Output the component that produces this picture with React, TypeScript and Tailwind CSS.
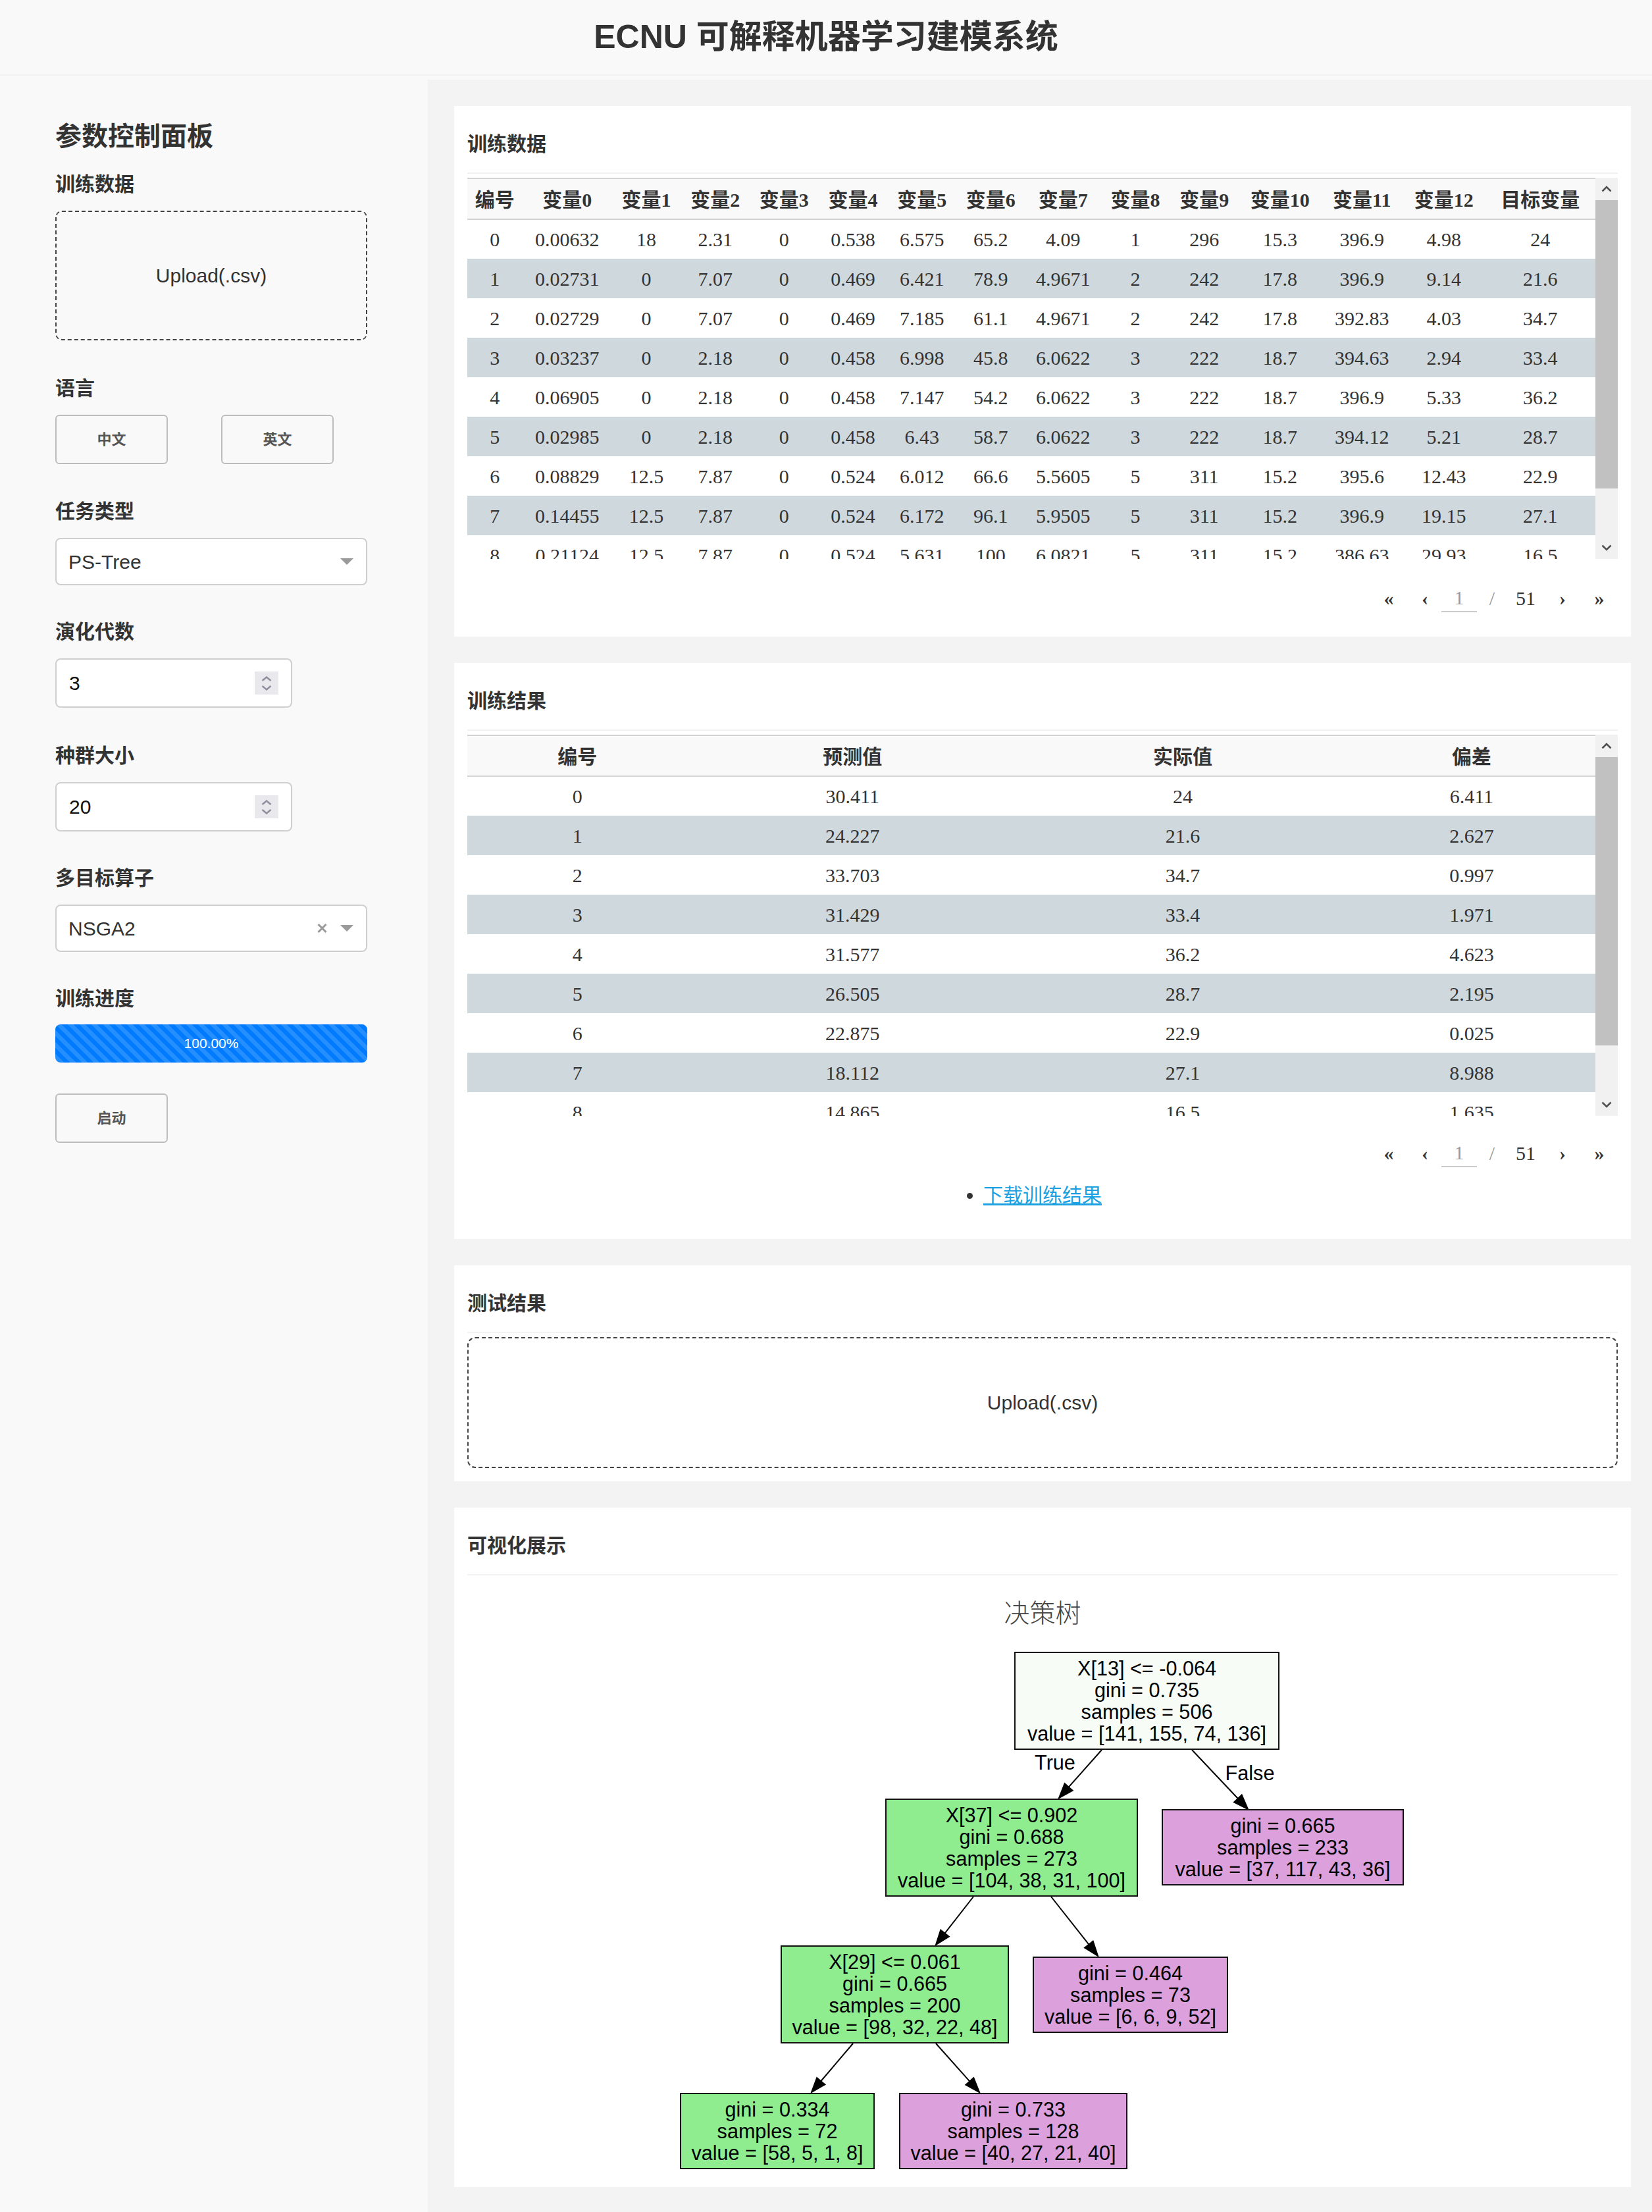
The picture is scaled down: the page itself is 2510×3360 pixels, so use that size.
import React from "react";

const serif = "font-['Liberation_Serif','Noto_Sans_CJK_SC',serif]";

const trainHeaders = [
  "编号", "变量0", "变量1", "变量2", "变量3", "变量4", "变量5", "变量6",
  "变量7", "变量8", "变量9", "变量10", "变量11", "变量12", "目标变量",
];

const trainRows: string[][] = [
  ["0", "0.00632", "18", "2.31", "0", "0.538", "6.575", "65.2", "4.09", "1", "296", "15.3", "396.9", "4.98", "24"],
  ["1", "0.02731", "0", "7.07", "0", "0.469", "6.421", "78.9", "4.9671", "2", "242", "17.8", "396.9", "9.14", "21.6"],
  ["2", "0.02729", "0", "7.07", "0", "0.469", "7.185", "61.1", "4.9671", "2", "242", "17.8", "392.83", "4.03", "34.7"],
  ["3", "0.03237", "0", "2.18", "0", "0.458", "6.998", "45.8", "6.0622", "3", "222", "18.7", "394.63", "2.94", "33.4"],
  ["4", "0.06905", "0", "2.18", "0", "0.458", "7.147", "54.2", "6.0622", "3", "222", "18.7", "396.9", "5.33", "36.2"],
  ["5", "0.02985", "0", "2.18", "0", "0.458", "6.43", "58.7", "6.0622", "3", "222", "18.7", "394.12", "5.21", "28.7"],
  ["6", "0.08829", "12.5", "7.87", "0", "0.524", "6.012", "66.6", "5.5605", "5", "311", "15.2", "395.6", "12.43", "22.9"],
  ["7", "0.14455", "12.5", "7.87", "0", "0.524", "6.172", "96.1", "5.9505", "5", "311", "15.2", "396.9", "19.15", "27.1"],
  ["8", "0.21124", "12.5", "7.87", "0", "0.524", "5.631", "100", "6.0821", "5", "311", "15.2", "386.63", "29.93", "16.5"],
];

const resultHeaders = ["编号", "预测值", "实际值", "偏差"];

const resultRows: string[][] = [
  ["0", "30.411", "24", "6.411"],
  ["1", "24.227", "21.6", "2.627"],
  ["2", "33.703", "34.7", "0.997"],
  ["3", "31.429", "33.4", "1.971"],
  ["4", "31.577", "36.2", "4.623"],
  ["5", "26.505", "28.7", "2.195"],
  ["6", "22.875", "22.9", "0.025"],
  ["7", "18.112", "27.1", "8.988"],
  ["8", "14.865", "16.5", "1.635"],
];

const Label = ({ children, mt = "mt-[55px]" }: { children: React.ReactNode; mt?: string }) => (
  <div className={`${mt} text-[30px] leading-[36px] font-bold text-[#333]`}>{children}</div>
);

const Caret = () => (
  <svg width="20" height="10" viewBox="0 0 20 10">
    <polygon points="0,0 20,0 10,10" fill="#9a9a9a" />
  </svg>
);

const NumberInput = ({ value }: { value: string }) => (
  <div className="mt-[22px] w-[360px] h-[75px] rounded-[8px] border-2 border-[#cfcfcf] bg-white flex items-center pl-[19px] pr-[19px]">
    <span className="flex-1 text-[30px] text-[#111]">{value}</span>
    <div className="w-[36px] h-[35px] bg-[#e9e9ed] flex flex-col items-center justify-center gap-[6px]">
      <svg width="16" height="8" viewBox="0 0 16 8">
        <polyline points="1.5,7 8,1.5 14.5,7" fill="none" stroke="#8d8d9c" strokeWidth="2.4" />
      </svg>
      <svg width="16" height="8" viewBox="0 0 16 8">
        <polyline points="1.5,1 8,6.5 14.5,1" fill="none" stroke="#8d8d9c" strokeWidth="2.4" />
      </svg>
    </div>
  </div>
);

const OutlineButton = ({ children, className = "" }: { children: React.ReactNode; className?: string }) => (
  <button className={`w-[171px] h-[75px] rounded-[6px] border-2 border-[#bdbdbd] bg-[#f9f9f9] text-[22px] font-bold text-[#555] ${className}`}>
    {children}
  </button>
);

const Sidebar = () => (
  <aside className="w-[650px] shrink-0 pl-[84px] pt-[62px]">
    <h2 className="text-[40px] leading-[48px] font-bold text-[#333]">参数控制面板</h2>
    <Label mt="mt-[31px]">训练数据</Label>
    <div className="mt-[22px] w-[474px] h-[197px] rounded-[10px] border-2 border-dashed border-[#444] flex items-center justify-center text-[30px] text-[#333]">
      Upload(.csv)
    </div>

    <Label>语言</Label>
    <div className="mt-[22px] flex">
      <OutlineButton>中文</OutlineButton>
      <OutlineButton className="ml-[81px]">英文</OutlineButton>
    </div>

    <Label mt="mt-[54px]">任务类型</Label>
    <div className="mt-[22px] w-[474px] h-[72px] rounded-[8px] border-2 border-[#cfcfcf] bg-white flex items-center pl-[18px] pr-[19px]">
      <span className="flex-1 text-[30px] text-[#333]">PS-Tree</span>
      <Caret />
    </div>

    <Label mt="mt-[53px]">演化代数</Label>
    <NumberInput value="3" />

    <Label>种群大小</Label>
    <NumberInput value="20" />

    <Label mt="mt-[53px]">多目标算子</Label>
    <div className="mt-[22px] w-[474px] h-[72px] rounded-[8px] border-2 border-[#cfcfcf] bg-white flex items-center pl-[18px] pr-[19px]">
      <span className="flex-1 text-[30px] text-[#333]">NSGA2</span>
      <svg width="15" height="14" viewBox="0 0 15 14" className="mr-[20px]">
        <path d="M1.5 1 L13.5 13 M13.5 1 L1.5 13" stroke="#9a9a9a" strokeWidth="3" />
      </svg>
      <Caret />
    </div>

    <Label mt="mt-[53px]">训练进度</Label>
    <div className="mt-[21px] w-[474px] h-[58px] rounded-[8px] bg-[#007bff] bg-[linear-gradient(45deg,rgba(255,255,255,.15)_25%,transparent_25%,transparent_50%,rgba(255,255,255,.15)_50%,rgba(255,255,255,.15)_75%,transparent_75%,transparent)] bg-[length:18px_18px] flex items-center justify-center text-[21px] text-white">
      100.00%
    </div>

    <OutlineButton className="mt-[47px] h-[74px]">启动</OutlineButton>
  </aside>
);

const Card = ({ title, children, className = "" }: { title: string; children: React.ReactNode; className?: string }) => (
  <section className={`bg-white px-[20px] pt-[40px] ${className}`}>
    <h3 className="text-[30px] leading-[36px] font-bold text-[#333]">{title}</h3>
    <div className="mt-[25px] h-[2px] bg-[#f2f2f2]" />
    {children}
  </section>
);

const FakeScrollbar = () => (
  <div className="w-[34px] shrink-0 bg-[#f1f1f1] flex flex-col">
    <div className="h-[34px] flex items-center justify-center">
      <svg width="16" height="10" viewBox="0 0 16 10">
        <polyline points="1.5,8.5 8,2 14.5,8.5" fill="none" stroke="#505050" strokeWidth="2.6" />
      </svg>
    </div>
    <div className="h-[438px] bg-[#c1c1c1]" />
    <div className="flex-1" />
    <div className="h-[34px] flex items-center justify-center">
      <svg width="16" height="10" viewBox="0 0 16 10">
        <polyline points="1.5,1.5 8,8 14.5,1.5" fill="none" stroke="#505050" strokeWidth="2.6" />
      </svg>
    </div>
  </div>
);

const DataTable = ({ headers, rows }: { headers: string[]; rows: string[][] }) => (
  <div className="mt-[6px] flex h-[579px]">
    <div className="flex-1 overflow-hidden">
      <table className={`w-full border-collapse text-[30px] text-[#333] ${serif}`}>
        <thead>
          <tr>
            {headers.map((h) => (
              <th key={h} className="h-[62px] p-0 pt-[3px] font-bold text-center bg-[#f9f9f9] border-t-2 border-b-2 border-[#d3d3d3] whitespace-nowrap">
                {h}
              </th>
            ))}
          </tr>
        </thead>
        <tbody>
          {rows.map((row, i) => (
            <tr key={i} className={i % 2 === 1 ? "bg-[#cfd8dc]" : "bg-white"}>
              {row.map((cell, j) => (
                <td key={j} className="h-[60px] p-0 text-center whitespace-nowrap">
                  {cell}
                </td>
              ))}
            </tr>
          ))}
        </tbody>
      </table>
    </div>
    <FakeScrollbar />
  </div>
);

const Pagination = ({ mt }: { mt: string }) => (
  <div className={`${mt} h-[44px] flex items-center justify-end pr-[18px] text-[30px] ${serif}`}>
    <span className="w-[20px] text-center text-[#333] font-bold">«</span>
    <span className="ml-[40px] w-[10px] text-center text-[#333] font-bold">‹</span>
    <span className="ml-[20px] w-[54px] h-[44px] border-b-2 border-[#cccccc] flex items-center justify-center text-[#999]">1</span>
    <span className="ml-[16px] w-[14px] text-center text-[#999]">/</span>
    <span className="ml-[29px] w-[30px] text-center text-[#333]">51</span>
    <span className="ml-[36px] w-[10px] text-center text-[#333] font-bold">›</span>
    <span className="ml-[41px] w-[20px] text-center text-[#333] font-bold">»</span>
  </div>
);

type TreeNode = { x1: number; y1: number; x2: number; y2: number; fill: string; lines: string[] };

const treeNodes: TreeNode[] = [
  { x1: 1543, y1: 2508, x2: 1944, y2: 2655, fill: "#f7fdf6", lines: ["X[13] <= -0.064", "gini = 0.735", "samples = 506", "value = [141, 155, 74, 136]"] },
  { x1: 1347, y1: 2731, x2: 1729, y2: 2878, fill: "#8fec8f", lines: ["X[37] <= 0.902", "gini = 0.688", "samples = 273", "value = [104, 38, 31, 100]"] },
  { x1: 1767, y1: 2747, x2: 2133, y2: 2861, fill: "#dca0dc", lines: ["gini = 0.665", "samples = 233", "value = [37, 117, 43, 36]"] },
  { x1: 1188, y1: 2954, x2: 1533, y2: 3101, fill: "#8fec8f", lines: ["X[29] <= 0.061", "gini = 0.665", "samples = 200", "value = [98, 32, 22, 48]"] },
  { x1: 1571, y1: 2971, x2: 1866, y2: 3085, fill: "#dca0dc", lines: ["gini = 0.464", "samples = 73", "value = [6, 6, 9, 52]"] },
  { x1: 1035, y1: 3178, x2: 1329, y2: 3292, fill: "#8fec8f", lines: ["gini = 0.334", "samples = 72", "value = [58, 5, 1, 8]"] },
  { x1: 1368, y1: 3178, x2: 1713, y2: 3292, fill: "#dca0dc", lines: ["gini = 0.733", "samples = 128", "value = [40, 27, 21, 40]"] },
];

const treeEdges: [number, number, number, number][] = [
  [1675, 2656, 1610, 2729],
  [1812, 2656, 1897, 2746],
  [1480, 2879, 1423, 2952],
  [1598, 2879, 1669, 2969],
  [1297, 3102, 1234, 3176],
  [1423, 3102, 1489, 3176],
];

const Edge = ({ e }: { e: [number, number, number, number] }) => {
  const [sx, sy, tx, ty] = e;
  const len = Math.hypot(tx - sx, ty - sy);
  const ux = (tx - sx) / len;
  const uy = (ty - sy) / len;
  const bx = tx - ux * 22;
  const by = ty - uy * 22;
  const px = -uy * 8;
  const py = ux * 8;
  return (
    <g>
      <line x1={sx} y1={sy} x2={bx} y2={by} stroke="#000" strokeWidth="2" />
      <polygon points={`${tx},${ty} ${bx + px},${by + py} ${bx - px},${by - py}`} fill="#000" stroke="#000" strokeWidth="2" />
    </g>
  );
};

const DecisionTree = () => (
  <svg width="1110" height="800" viewBox="1030 2500 1110 800" className="block mx-auto mt-[27px]">
    {treeEdges.map((e, i) => (
      <Edge key={i} e={e} />
    ))}
    {treeNodes.map((n, i) => {
      const cx = (n.x1 + n.x2) / 2;
      const cy = (n.y1 + n.y2) / 2;
      return (
        <g key={i}>
          <rect x={n.x1} y={n.y1} width={n.x2 - n.x1} height={n.y2 - n.y1} fill={n.fill} stroke="#111" strokeWidth="2" />
          {n.lines.map((line, j) => (
            <text
              key={j}
              x={cx}
              y={cy + (j - (n.lines.length - 1) / 2) * 32.7 + 11}
              textAnchor="middle"
              fontFamily="Liberation Sans, Arial, sans-serif"
              fontSize="30.6"
              fill="#000"
            >
              {line}
            </text>
          ))}
        </g>
      );
    })}
    <text x="1604" y="2686" textAnchor="middle" fontFamily="Liberation Sans, Arial, sans-serif" fontSize="30.6" fill="#000">
      True
    </text>
    <text x="1900" y="2702" textAnchor="middle" fontFamily="Liberation Sans, Arial, sans-serif" fontSize="30.6" fill="#000">
      False
    </text>
  </svg>
);

export default function App() {
  return (
    <div className="min-h-[3360px] bg-[#f9f9f9] text-[#333] font-['Liberation_Sans','Noto_Sans_CJK_SC',sans-serif]">
      <header className="h-[115px] border-b-2 border-[#f1f1f1] flex items-center justify-center">
        <h1 className="text-[50px] font-bold text-[#333]">ECNU 可解释机器学习建模系统</h1>
      </header>

      <div className="flex pt-[6px]">
        <Sidebar />

        <main className="flex-1 bg-[#f3f3f3] pt-[40px] pl-[40px] pr-[32px] pb-[40px] flex flex-col gap-[40px]">
          <Card title="训练数据" className="pb-[37px]">
            <DataTable headers={trainHeaders} rows={trainRows} />
            <Pagination mt="mt-[37px]" />
          </Card>

          <Card title="训练结果" className="pb-[48px]">
            <DataTable headers={resultHeaders} rows={resultRows} />
            <Pagination mt="mt-[34px]" />
            <div className="mt-[25px] flex justify-center">
              <ul className="list-disc text-[30px] leading-[36px] text-[#333]">
                <li>
                  <a href="#" className="text-[#1ba1e2] underline">
                    下载训练结果
                  </a>
                </li>
              </ul>
            </div>
          </Card>

          <Card title="测试结果" className="pb-[20px]">
            <div className="mt-[6px] h-[199px] rounded-[12px] border-2 border-dashed border-[#444] flex items-center justify-center text-[30px] text-[#333]">
              Upload(.csv)
            </div>
          </Card>

          <Card title="可视化展示" className="pb-[20px]">
            <div className="mt-[34px] text-center text-[39px] leading-[48px] font-light text-[#444]">决策树</div>
            <DecisionTree />
          </Card>
        </main>
      </div>
    </div>
  );
}
